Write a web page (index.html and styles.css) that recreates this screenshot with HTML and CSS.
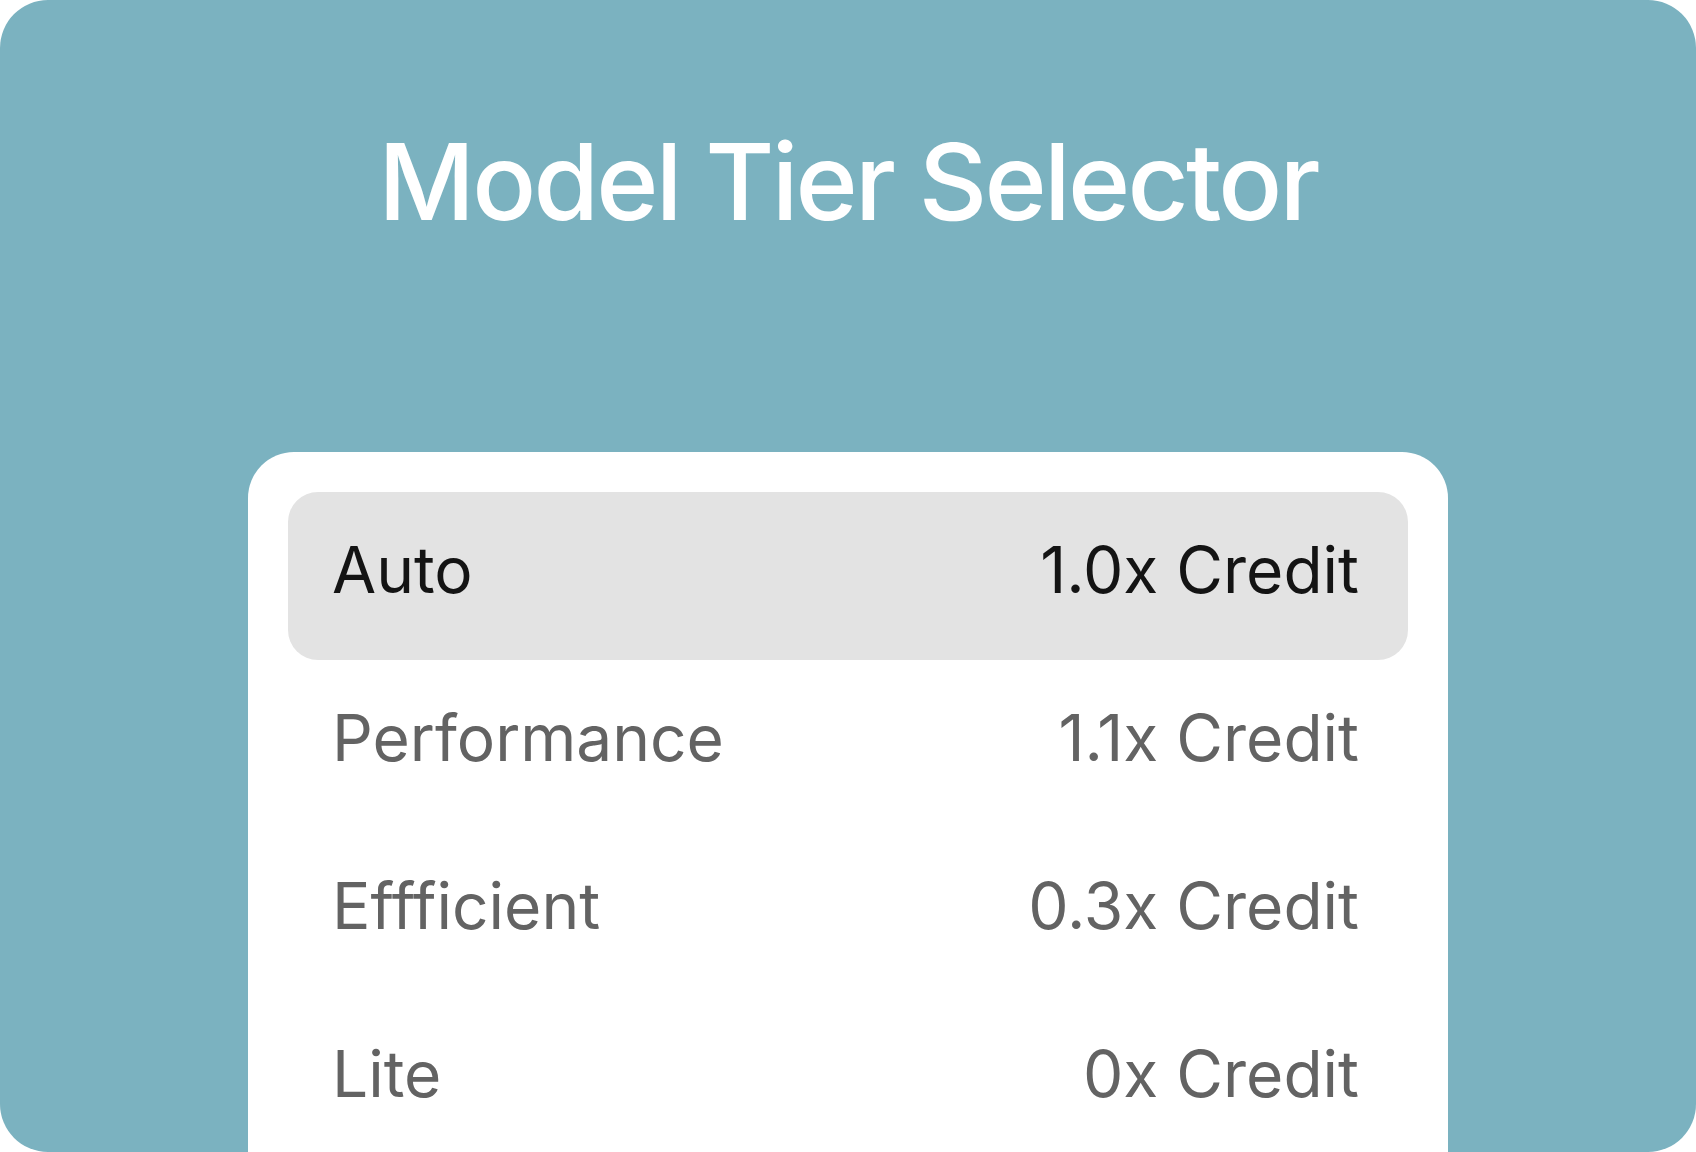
FILE: index.html
```html
<!DOCTYPE html>
<html lang="en">
<head>
  <meta charset="UTF-8" />
  <meta name="viewport" content="width=device-width, initial-scale=1.0"/>
  <title>Model Tier Selector</title>
  <link rel="stylesheet" href="styles.css">
</head>
<body>

  <div class="frame">
    <h1 class="title">Model Tier Selector</h1>

    <!-- Tier list -->
    <div class="card">
      <div class="tier selected">
        <span class="tier-name">Auto</span>
        <span class="tier-cost">1.0x Credit</span>
      </div>
      <div class="tier">
        <span class="tier-name">Performance</span>
        <span class="tier-cost">1.1x Credit</span>
      </div>
      <div class="tier">
        <span class="tier-name">Effficient</span>
        <span class="tier-cost">0.3x Credit</span>
      </div>
      <div class="tier">
        <span class="tier-name">Lite</span>
        <span class="tier-cost">0x Credit</span>
      </div>
    </div>
  </div>

</body>
</html>
```

FILE: styles.css
```css
:root {
  --teal: #7bb2c0;
  --row-selected: #e3e3e3;
  --text-dark: #141414;
  --text-muted: #636363;
}

* {
  box-sizing: border-box;
}

body {
  margin: 0;
  background: #ffffff;
  font-family: Inter, "Noto Sans", sans-serif;
}

.frame {
  width: 1696px;
  height: 1152px;
  background: var(--teal);
  border-radius: 48px;
  overflow: hidden;
  display: flex;
  flex-direction: column;
  align-items: center;
}

.title {
  margin: 129px 0 0;
  font-size: 106px;
  font-weight: 500;
  line-height: 1;
  letter-spacing: -0.026em;
  color: #ffffff;
}

.card {
  width: 1200px;
  margin-top: 217px;
  padding: 40px 40px 0;
  background: #ffffff;
  border-radius: 46px 46px 0 0;
  flex: 1;
}

.tier {
  height: 168px;
  padding: 0 49px 12px 44px;
  display: flex;
  justify-content: space-between;
  align-items: center;
  font-size: 64px;
  line-height: 1;
  color: var(--text-muted);
  border-radius: 30px;
}

.tier.selected {
  background: var(--row-selected);
  color: var(--text-dark);
}
```
